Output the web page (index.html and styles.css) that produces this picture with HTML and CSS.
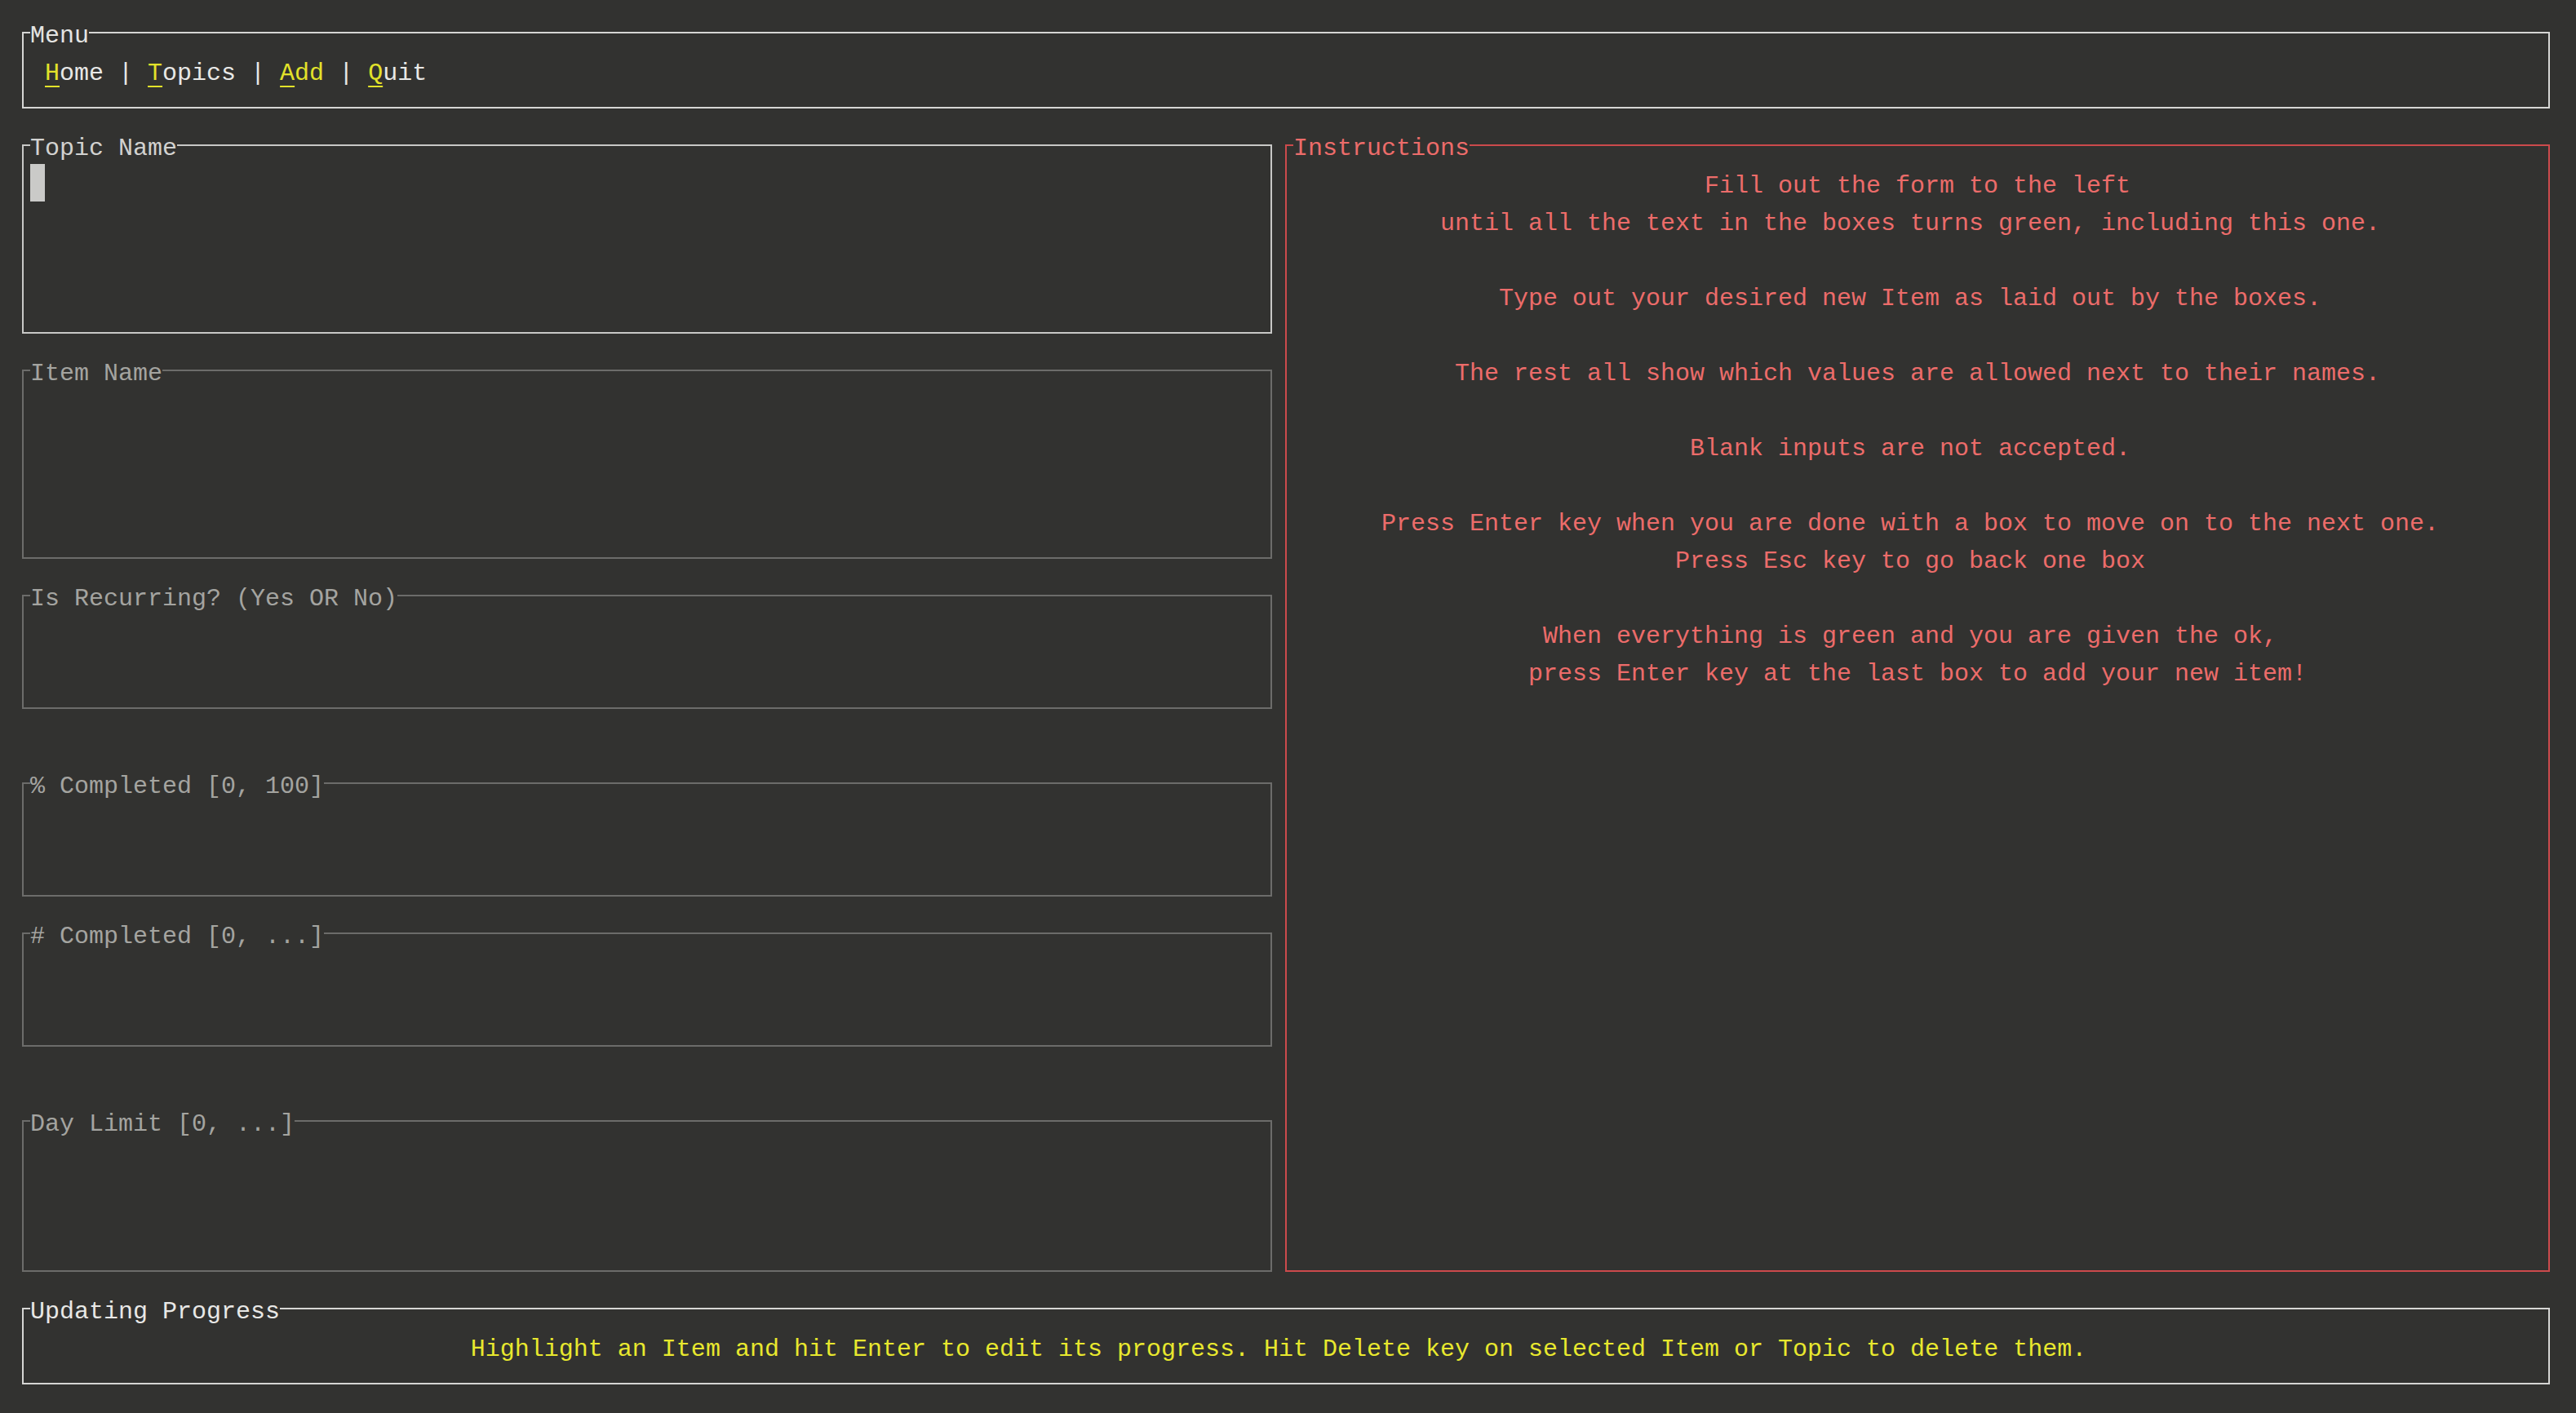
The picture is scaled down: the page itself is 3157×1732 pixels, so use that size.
FILE: index.html
```html
<!DOCTYPE html>
<html lang="en">
<head>
<meta charset="utf-8">
<title>Add Item</title>
<link rel="stylesheet" href="styles.css">
</head>
<body>
<div class="screen">
  <fieldset class="box box-menu">
    <legend class="label">Menu</legend>
    <nav class="menu"><span class="t"><span class="key">H</span>ome | <span class="key">T</span>opics | <span class="active"><span class="key">A</span>dd</span> | <span class="key">Q</span>uit</span></nav>
  </fieldset>

  <div class="middle">
    <div class="form">
      <fieldset class="box box-focus box-lg">
        <legend class="label">Topic Name</legend>
        <div class="field"><span class="cursor"></span></div>
      </fieldset>
      <fieldset class="box box-dim box-lg">
        <legend class="label">Item Name</legend>
      </fieldset>
      <fieldset class="box box-dim box-sm">
        <legend class="label">Is Recurring? (Yes OR No)</legend>
      </fieldset>
      <fieldset class="box box-dim box-sm spaced">
        <legend class="label">% Completed [0, 100]</legend>
      </fieldset>
      <fieldset class="box box-dim box-sm">
        <legend class="label"># Completed [0, ...]</legend>
      </fieldset>
      <fieldset class="box box-dim box-md spaced">
        <legend class="label">Day Limit [0, ...]</legend>
      </fieldset>
    </div>

    <fieldset class="box box-alert">
      <legend class="label">Instructions</legend>
      <div class="instructions">
        <div class="para">
          <div class="line"><span class="t">Fill out the form to the left</span></div>
          <div class="line floor"><span class="t">until all the text in the boxes turns green, including this one.</span></div>
        </div>
        <div class="para">
          <div class="line floor"><span class="t">Type out your desired new Item as laid out by the boxes.</span></div>
        </div>
        <div class="para">
          <div class="line"><span class="t">The rest all show which values are allowed next to their names.</span></div>
        </div>
        <div class="para">
          <div class="line floor"><span class="t">Blank inputs are not accepted.</span></div>
        </div>
        <div class="para">
          <div class="line floor"><span class="t">Press Enter key when you are done with a box to move on to the next one.</span></div>
          <div class="line floor"><span class="t">Press Esc key to go back one box</span></div>
        </div>
        <div class="para">
          <div class="line floor"><span class="t">When everything is green and you are given the ok,</span></div>
          <div class="line"><span class="t">press Enter key at the last box to add your new item!</span></div>
        </div>
      </div>
    </fieldset>
  </div>

  <fieldset class="box box-status">
    <legend class="label">Updating Progress</legend>
    <div class="status"><span class="t">Highlight an Item and hit Enter to edit its progress. Hit Delete key on selected Item or Topic to delete them.</span></div>
  </fieldset>
</div>
</body>
</html>
```

FILE: styles.css
```css
html, body {
  margin: 0;
  padding: 0;
  background: #323230;
}

body {
  font-family: "Liberation Mono", "DejaVu Sans Mono", monospace;
  font-size: 30px;
  line-height: 46px;
  color: #e4e4e2;
}

.screen {
  width: 3098px;
  padding: 17px 0 0 27px;
  display: flex;
  flex-direction: column;
  gap: 22px;
}

.box {
  box-sizing: border-box;
  margin: 0;
  padding: 0;
  min-width: 0;
  border: 2px solid #d6d6d4;
}

/* text sits a few pixels lower in its cell, as in the terminal */
.t {
  line-height: 38px;
  vertical-align: -4px;
}

.label {
  padding: 8px 0 0;
  margin-left: 8px;
  line-height: 38px;
  white-space: pre;
}

.box-menu {
  height: 116px;
}

.menu {
  padding-left: 26px;
  white-space: pre;
  color: #e8e8e6;
}

.key {
  color: #e2e22a;
  text-decoration: underline;
  text-decoration-thickness: 2px;
  text-underline-offset: 7px;
}

.active {
  color: #e2e22a;
}

.middle {
  display: flex;
  gap: 16px;
}

.form {
  width: 1532px;
  display: flex;
  flex-direction: column;
  gap: 22px;
}

.box-focus {
  border-color: #c8c8c6;
  color: #d2d2d0;
}

.box-dim {
  border-color: #6c6c6a;
  color: #a4a4a0;
}

.box-lg {
  height: 254px;
}

.box-md {
  height: 208px;
}

.box-sm {
  height: 162px;
}

.spaced {
  margin-top: 46px;
}

.field {
  padding-left: 8px;
  height: 46px;
}

.cursor {
  display: inline-block;
  width: 18px;
  height: 46px;
  vertical-align: top;
  background: #cacac8;
}

.box-alert {
  flex: 1;
  height: 1404px;
  border-color: #cc4a4c;
  color: #ec6c6a;
}

.instructions {
  padding: 0 8px;
  text-align: center;
  white-space: nowrap;
}

.para {
  margin-bottom: 46px;
}

.line {
  height: 46px;
}

/* terminal centering rounds down to whole cells */
.line.floor {
  padding-right: 18px;
}

.box-status {
  height: 116px;
  color: #e8e8e6;
}

.status {
  padding: 0 26px 0 8px;
  text-align: center;
  white-space: pre;
  color: #e8e82e;
}
```
